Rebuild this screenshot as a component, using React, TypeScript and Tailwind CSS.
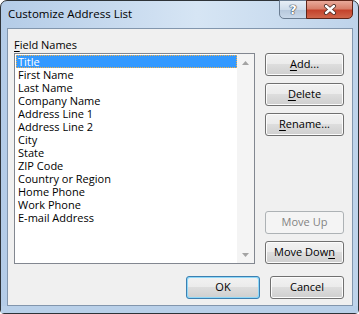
import React from "react";

const items = [
  "Title",
  "First Name",
  "Last Name",
  "Company Name",
  "Address Line 1",
  "Address Line 2",
  "City",
  "State",
  "ZIP Code",
  "Country or Region",
  "Home Phone",
  "Work Phone",
  "E-mail Address",
];

function Btn({
  children,
  w = "w-[79px]",
  disabled = false,
  def = false,
}: {
  children: React.ReactNode;
  w?: string;
  disabled?: boolean;
  def?: boolean;
}) {
  if (disabled) {
    return (
      <div
        className={`${w} flex h-[23px] items-center justify-center rounded-[3px] border border-[#adb2b5] bg-[#f4f4f4] text-[#838383]`}
      >
        {children}
      </div>
    );
  }
  if (def) {
    return (
      <div
        className={`${w} flex h-[23px] items-center justify-center rounded-[3px] border border-[#3c7fb1] bg-[#8fd8f8] text-black`}
      >
        <div className="flex h-full w-full items-center justify-center rounded-[2px] bg-[linear-gradient(to_bottom,#f2f2f2_0%,#ebebeb_49%,#dddddd_50%,#cfcfcf_100%)] [clip-path:inset(1px_round_2px)]">
          {children}
        </div>
      </div>
    );
  }
  return (
    <div
      className={`${w} flex h-[23px] items-center justify-center rounded-[3px] border border-[#707070] bg-[linear-gradient(to_bottom,#f2f2f2_0%,#ebebeb_49%,#dddddd_50%,#cfcfcf_100%)] shadow-[inset_0_0_0_1px_#fcfcfc] text-black`}
    >
      {children}
    </div>
  );
}

export default function App() {
  return (
    <div className="h-[314px] w-[359px] bg-white font-['Open_Sans','Noto_Sans',sans-serif] text-[11px] text-black">
      <div className="flex h-full w-full flex-col rounded-t-[7px] rounded-b-[4px] border border-[#2e3338] bg-[linear-gradient(to_right,#b4cce7_0%,#c9dbef_35%,#d6e5f4_55%,#bed3ea_100%)]">
        {/* Title bar */}
        <div className="flex h-[27px] items-start">
          <span className="ml-[7px] mt-[5px] text-[11.5px] leading-[15px] text-black">
            Customize Address List
          </span>
          <div className="ml-auto mr-[5px] -mt-px flex">
            <div className="flex h-[19px] w-[28px] items-center justify-center rounded-bl-[5px] border border-[#6b7d92] bg-[linear-gradient(to_bottom,#e7eef6_0%,#cfdcea_50%,#b6c7db_51%,#c9d8e9_100%)]">
              <span className="font-['DejaVu_Sans',sans-serif] text-[13px] font-bold leading-none text-white [text-shadow:0_0_1px_#2a3340,0_0_1px_#2a3340,0_0_1px_#2a3340]">
                ?
              </span>
            </div>
            <div className="-ml-px flex h-[19px] w-[47px] items-center justify-center rounded-br-[5px] border border-[#5e2418] bg-[linear-gradient(to_bottom,#e9aa9a_0%,#d8806b_45%,#c4432c_55%,#d0664b_100%)]">
              <svg width="14" height="11" viewBox="0 0 14 11">
                <path d="M3 2 L11 9 M11 2 L3 9" stroke="#4a2a22" strokeWidth="4" strokeLinecap="round" />
                <path d="M3 2 L11 9 M11 2 L3 9" stroke="#ffffff" strokeWidth="2.4" strokeLinecap="round" />
              </svg>
            </div>
          </div>
        </div>

        {/* Client area */}
        <div className="ml-[6px] flex h-[278px] w-[346px] flex-col border border-[#8296ad] bg-[#f0f0f0] pb-[6px] pl-[6px] pr-[8px] pt-[8px]">
          <div className="flex gap-[10px]">
            <div className="flex w-[241px] flex-col">
              <div className="h-[16px] leading-[15px]">
                <span className="underline underline-offset-[2px]">F</span>ield Names
              </div>
              <div className="flex h-[211px] border border-[#828790] bg-white">
                <div className="flex flex-1 flex-col pl-[1px] pt-[1px]">
                  {items.map((it, i) =>
                    i === 0 ? (
                      <div
                        key={it}
                        className="h-[13px] bg-[#3399ff] pl-[2px] leading-[13px] text-white outline-1 -outline-offset-1 outline-dotted outline-[#f2b04a]"
                      >
                        {it}
                      </div>
                    ) : (
                      <div key={it} className="h-[13px] pl-[2px] leading-[13px]">
                        {it}
                      </div>
                    )
                  )}
                </div>
                <div className="flex w-[17px] flex-col justify-between bg-[#f4f4f4]">
                  <div className="flex h-[17px] items-center justify-center">
                    <svg width="7" height="4" viewBox="0 0 7 4">
                      <path d="M0 4 L3.5 0 L7 4 Z" fill="#a3a3a3" />
                    </svg>
                  </div>
                  <div className="flex h-[17px] items-center justify-center">
                    <svg width="7" height="4" viewBox="0 0 7 4">
                      <path d="M0 0 L7 0 L3.5 4 Z" fill="#a3a3a3" />
                    </svg>
                  </div>
                </div>
              </div>
            </div>
            <div className="flex w-[79px] flex-col gap-[7px] pt-[16px]">
              <Btn>
                <span>
                  <span className="underline underline-offset-[2px]">A</span>dd...
                </span>
              </Btn>
              <Btn>
                <span>
                  <span className="underline underline-offset-[2px]">D</span>elete
                </span>
              </Btn>
              <Btn>
                <span>
                  <span className="underline underline-offset-[2px]">R</span>ename...
                </span>
              </Btn>
              <div className="mt-auto">
                <Btn disabled>Move Up</Btn>
              </div>
              <Btn>
                <span>
                  Move Dow<span className="underline underline-offset-[2px]">n</span>
                </span>
              </Btn>
            </div>
          </div>
          <div className="mt-[12px] flex justify-end gap-[10px]">
            <Btn w="w-[74px]" def>
              OK
            </Btn>
            <Btn w="w-[74px]">Cancel</Btn>
          </div>
        </div>
        <div className="flex-1 bg-[#b9d0e9]" />
      </div>
    </div>
  );
}
